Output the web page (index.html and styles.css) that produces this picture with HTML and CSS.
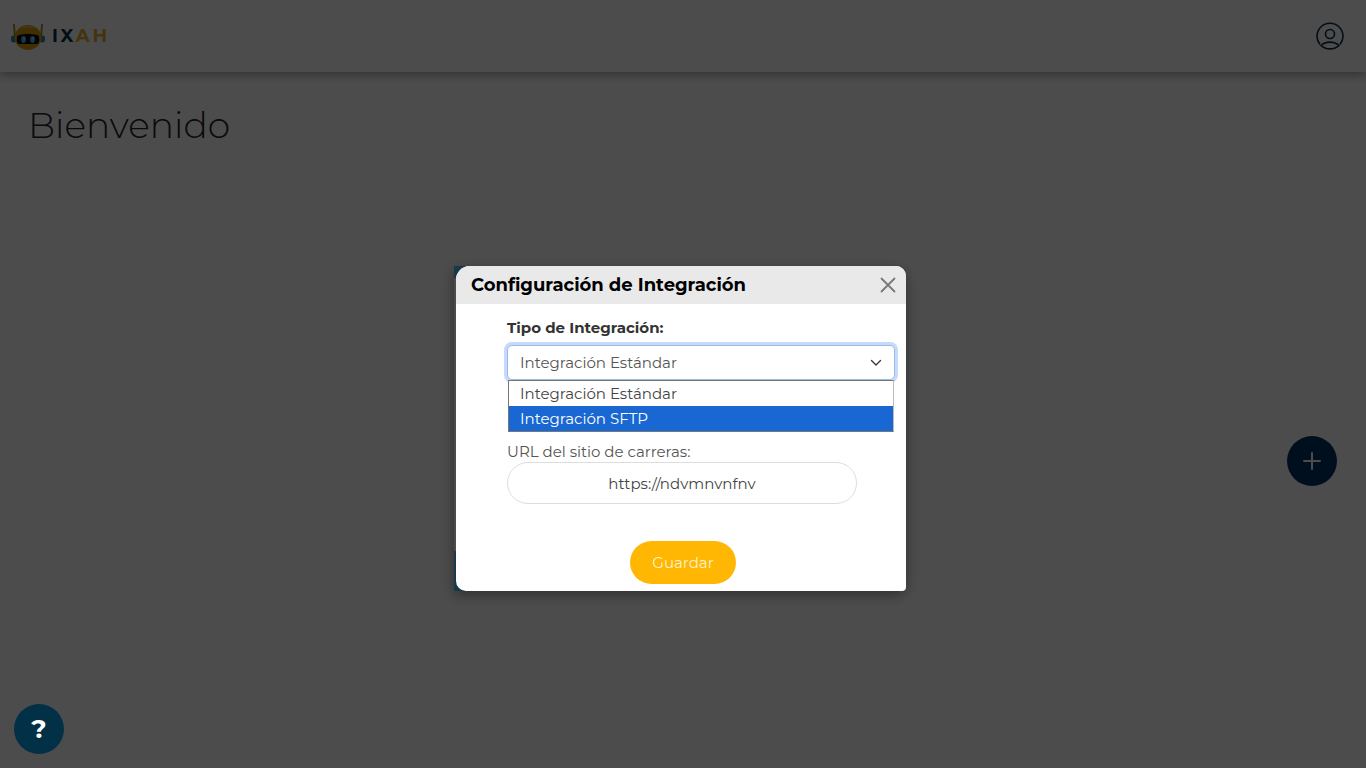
FILE: index.html
```
<!DOCTYPE html>
<html lang="es">
<head>
  <meta charset="UTF-8">
  <meta name="viewport" content="width=device-width, initial-scale=1.0">
  <title>IXAH</title>
  <link rel="stylesheet" href="styles.css">
</head>
<body>
  <header class="navbar">
    <a class="brand" href="#">
      <svg class="robot" viewBox="0 0 36 28" aria-hidden="true">
        <path d="M4 3l1 12M32 3l-1 12" stroke="#b08a1c" stroke-width="2" stroke-linecap="round"/>
        <rect x="1" y="13.500" width="5" height="7" rx="2.500" fill="#2489b8"/>
        <rect x="30" y="13.500" width="5" height="7" rx="2.500" fill="#2489b8"/>
        <ellipse cx="18" cy="15.500" rx="13.500" ry="12.500" fill="#d99a08"/>
        <path d="M9 8c4-5 14-6 18-1-6-2-12-2-18 1z" fill="#e8bd55"/>
        <path d="M7.500 13.500c6-2 15-2 21 0 2 6 0 8.500-2.500 8.500H10c-2.500 0-4.500-2.500-2.500-8.500z" fill="#0c0c10"/>
        <ellipse cx="13.500" cy="17.500" rx="2.400" ry="3.400" fill="#3db4ee"/>
        <ellipse cx="22.500" cy="17.500" rx="2.400" ry="3.400" fill="#3db4ee"/>
        <circle cx="14" cy="16.500" r="0.800" fill="#fff"/>
        <circle cx="23" cy="16.500" r="0.800" fill="#fff"/>
      </svg>
      <span class="brand-name">IX<span class="brand-accent">AH</span></span>
    </a>
    <button class="user-btn" aria-label="Usuario">
      <svg viewBox="0 0 28 28" fill="none" stroke="#06304a" stroke-width="1.600" aria-hidden="true">
        <path d="M4 22.500A13 13 0 1 1 24 22.500"/>
        <circle cx="14" cy="12" r="4.500"/>
        <path d="M5 23.500c4.500-4.500 13.500-4.500 18 0-4.500 4.500-13.500 4.500-18 0z"/>
      </svg>
    </button>
  </header>

  <main class="content">
    <h1>Bienvenido</h1>
  </main>

  <button class="add-btn" aria-label="Agregar">
    <svg viewBox="0 0 18 18" stroke="#fff" stroke-width="2" stroke-linecap="round" aria-hidden="true">
      <path d="M9 1v16M1 9h16"/>
    </svg>
  </button>

  <!-- Integration settings -->
  <div class="overlay">
    <div class="modal-frame">
      <form class="modal" role="dialog" aria-labelledby="modalTitle">
        <div class="modal-header">
          <h2 id="modalTitle">Configuración de Integración</h2>
          <button type="button" class="close-btn" aria-label="Cerrar">
            <svg viewBox="0 0 16 16" stroke="#777" stroke-width="1.800" stroke-linecap="round" aria-hidden="true">
              <path d="M1.500 1.500l13 13M14.500 1.500l-13 13"/>
            </svg>
          </button>
        </div>
        <div class="modal-body">
          <label class="type-label" for="tipo">Tipo de Integración:</label>
          <div class="select-wrap">
            <select id="tipo">
              <option selected>Integración Estándar</option>
              <option>Integración SFTP</option>
            </select>
            <svg class="chevron" viewBox="0 0 12 8" fill="none" stroke="#343a40" stroke-width="1.400" stroke-linecap="round" aria-hidden="true">
              <path d="M1.500 1.500l4.500 4.500 4.500-4.500"/>
            </svg>
            <ul class="options" role="listbox">
              <li role="option">Integración Estándar</li>
              <li role="option" class="active" aria-selected="true">Integración SFTP</li>
            </ul>
          </div>
          <label class="url-label" for="url">URL del sitio de carreras:</label>
          <input id="url" type="text" value="https://ndvmnvnfnv">
          <button type="button" class="save-btn">Guardar</button>
        </div>
      </form>
    </div>
  </div>

  <button class="help-btn" aria-label="Ayuda">?</button>
</body>
</html>
```
FILE: styles.css
```
* {
  box-sizing: border-box;
}
body {
  margin: 0;
  min-height: 100vh;
  background-color: #fff;
  font-family: Montserrat, Inter, sans-serif;
  font-size: 15px;
  color: #212529;
}
button {
  border: none;
  padding: 0;
  background: none;
  font-family: inherit;
  cursor: pointer;
}
.navbar {
  display: flex;
  justify-content: space-between;
  align-items: center;
  height: 72px;
  padding: 0 22px 0 10px;
  box-shadow: 0 2px 10px rgba(0, 0, 0, 0.4);
}
.brand {
  display: flex;
  align-items: center;
  gap: 6px;
  text-decoration: none;
}
.robot {
  width: 36px;
  height: 28px;
}
.brand-name {
  font-size: 18px;
  font-weight: 700;
  letter-spacing: 3px;
  color: #06304a;
}
.brand-accent {
  color: #e5ac25;
}
.user-btn svg {
  display: block;
  width: 28px;
  height: 28px;
}
.content {
  padding: 28px;
}
h1 {
  margin: 0;
  font-size: 36px;
  line-height: 50px;
  font-weight: 300;
}
.add-btn {
  position: fixed;
  right: 29px;
  bottom: 282px;
  display: flex;
  justify-content: center;
  align-items: center;
  width: 50px;
  height: 50px;
  border-radius: 50%;
  background-color: #003262;
}
.add-btn svg {
  width: 18px;
  height: 18px;
}

/* Modal */
.overlay {
  position: fixed;
  inset: 0;
  display: flex;
  justify-content: center;
  align-items: center;
  padding-top: 89px;
  background-color: rgba(0, 0, 0, 0.7);
}
.modal-frame {
  width: 452px;
  padding-left: 2px;
  margin-right: 6px;
  background: linear-gradient(#17394a 12px, transparent 12px, transparent 285px, #17394a 285px) left / 16px 100% no-repeat;
  border-radius: 0 10px 10px 0;
  box-shadow: 0 4px 14px rgba(0, 0, 0, 0.4);
}
.modal {
  overflow: hidden;
  border-radius: 14px 10px 4px 10px;
  background-color: #fff;
}
.modal-header {
  display: flex;
  justify-content: space-between;
  align-items: center;
  height: 38px;
  padding: 0 10px 0 15px;
  background-color: #e9e9e9;
}
h2 {
  margin: 0;
  font-size: 18px;
  font-weight: 700;
  color: #000;
}
.close-btn svg {
  display: block;
  width: 16px;
  height: 16px;
}
.modal-body {
  display: flex;
  flex-direction: column;
  padding: 14px 11px 7px 51px;
  color: #444;
}
.type-label {
  line-height: 20px;
  font-weight: 700;
  color: #333;
}
.select-wrap {
  position: relative;
  margin-top: 7px;
}
select {
  appearance: none;
  display: block;
  width: 100%;
  height: 35px;
  padding: 0 12px;
  border: 1px solid #9db9e0;
  border-radius: 5px;
  outline: none;
  background-color: #fff;
  box-shadow: 0 0 0 3px #c5dafc;
  font-family: inherit;
  font-size: 15px;
  color: #555;
}
.chevron {
  position: absolute;
  top: 14px;
  right: 13px;
  width: 12px;
  height: 8px;
}
.options {
  position: absolute;
  top: 100%;
  left: 1px;
  right: 1px;
  margin: 0;
  padding: 0;
  border: 1px solid #777;
  border-right-color: #bbb;
  list-style: none;
  background-color: #fff;
  line-height: 25px;
}
.options li {
  padding: 0 11px;
}
.options .active {
  background-color: #1967d2;
  color: #fff;
}
.url-label {
  margin-top: 62px;
  line-height: 20px;
  color: #555;
}
input {
  width: 350px;
  height: 42px;
  border: 1px solid #ddd;
  border-radius: 21px;
  font-family: inherit;
  font-size: 15px;
  text-align: center;
  color: #444;
}
.save-btn {
  width: 106px;
  height: 43px;
  margin: 37px 0 0 123px;
  border-radius: 22px;
  background-color: #ffb703;
  font-size: 15px;
  color: #fff3cf;
}

.help-btn {
  position: fixed;
  left: 14px;
  bottom: 14px;
  width: 50px;
  height: 50px;
  border-radius: 50%;
  background-color: #023047;
  font-size: 26px;
  font-weight: 700;
  color: #fff;
}
```
